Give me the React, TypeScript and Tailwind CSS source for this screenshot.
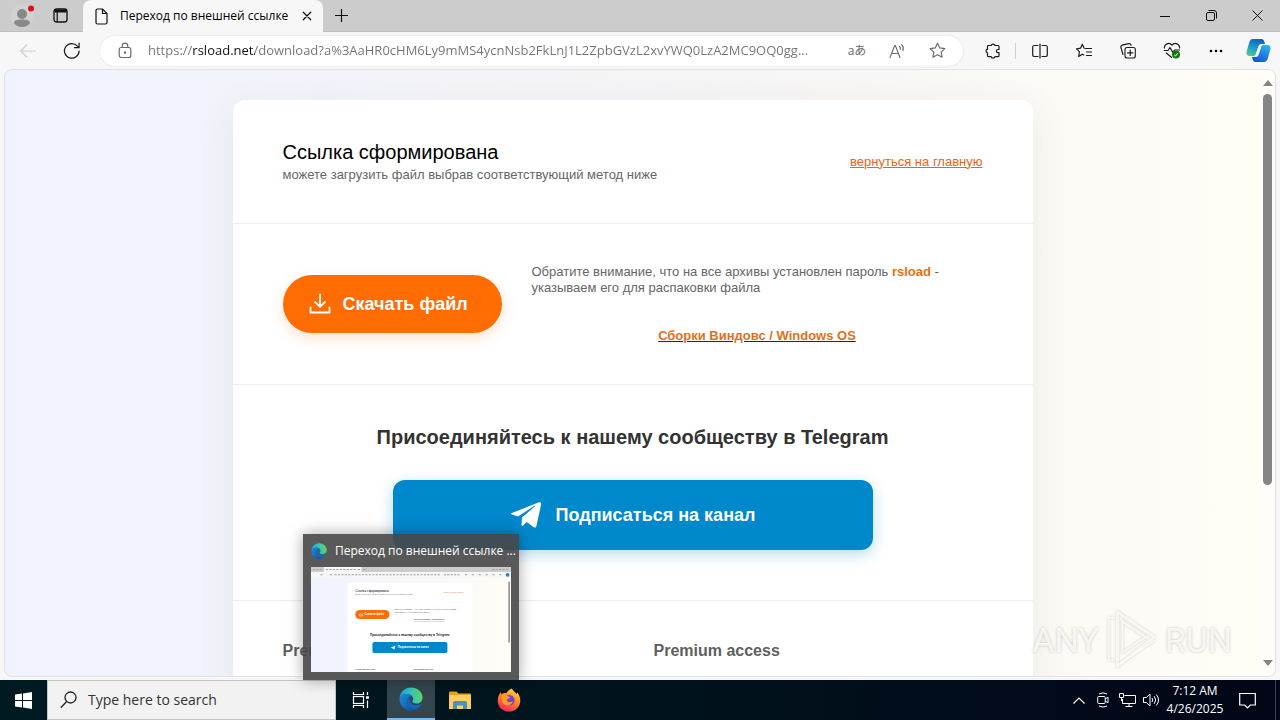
import type { ReactNode } from "react";

const PAGE_TITLE = "Переход по внешней ссылке";
const PAGE_URL =
  "https://rsload.net/download?a%3AaHR0cHM6Ly9mMS4ycnNsb2FkLnJ1L2ZpbGVzL2xvYWQ0LzA2MC9OQ0gg...";

function IconButton({
  label,
  className,
  children,
}: {
  label: string;
  className: string;
  children: ReactNode;
}) {
  return (
    <button
      type="button"
      aria-label={label}
      className={`flex shrink-0 items-center justify-center ${className}`}
    >
      {children}
    </button>
  );
}

function LineIcon({ size = 16, children }: { size?: number; children: ReactNode }) {
  return (
    <svg
      width={size}
      height={size}
      viewBox="0 0 16 16"
      fill="none"
      stroke="currentColor"
      strokeWidth="1.1"
      strokeLinecap="round"
      strokeLinejoin="round"
      aria-hidden="true"
    >
      {children}
    </svg>
  );
}

function EdgeLogo({ id, size }: { id: string; size: number }) {
  return (
    <svg width={size} height={size} viewBox="0 0 24 24" className="shrink-0" aria-hidden="true">
      <defs>
        <linearGradient id={`${id}-top`} x1="0" y1="0.6" x2="1" y2="0.4">
          <stop offset="0" stopColor="#1b9de2" />
          <stop offset="0.5" stopColor="#2fc3c8" />
          <stop offset="1" stopColor="#62d84e" />
        </linearGradient>
        <linearGradient id={`${id}-low`} x1="0" y1="0" x2="1" y2="1">
          <stop offset="0" stopColor="#1b8fdc" />
          <stop offset="1" stopColor="#0c4fa0" />
        </linearGradient>
      </defs>
      <path
        d="M.6 11C1.200 4.800 6 .4 12 .4c6.700 0 11.600 4.700 11.600 10 0 3.600-2.800 6.100-6.200 6.100-2.700 0-4.200-.9-4.200-1.900 0-.7 1-1.200 1-2.800 0-2.600-2.800-4.900-6.300-4.900C4.400 6.900 1.700 8.500.6 11z"
        fill={`url(#${id}-top)`}
      />
      <path
        d="M.5 12.300C.5 9 3.700 6.900 7.900 6.900c2.300 0 4.300 1 5.400 2.500-2.600-.6-5 1.500-5 4.700 0 4.400 3.400 7.800 7.700 8.600-1.200.5-2.600.9-4 .9C5.500 23.600.5 18.500.5 12.300z"
        fill={`url(#${id}-low)`}
      />
      <path
        d="M8.300 14.100c0-1.700.8-3.100 1.900-3.900-.3 4.500 3 8 7.300 8 1.800 0 3.300-.5 4.400-1.100.4-.2.7.1.5.5-1.300 2.600-3.600 4.400-6.400 5.100-4.300-.8-7.700-4.200-7.700-8.600z"
        fill="#1466b8"
      />
    </svg>
  );
}

function TabStrip() {
  return (
    <header className="flex h-8 shrink-0 items-stretch border-b border-[#bdbdbd] bg-[#cccccc] text-black">
      <div className="flex w-[83px] shrink-0 items-center rounded-br-md">
        <IconButton label="Profile" className="w-11">
          <svg width="26" height="24" viewBox="0 0 26 24" aria-hidden="true">
            <circle cx="13" cy="12" r="11" fill="#d4d2d0" />
            <circle cx="13" cy="10" r="5" fill="#8a8886" />
            <path d="M5 19c0-3 3.500-3.500 8-3.500s8 .5 8 3.500c-1.600 2.500-4.500 4-8 4s-6.400-1.500-8-4z" fill="#8a8886" />
            <circle cx="22" cy="4.500" r="3" fill="#e00b1c" />
          </svg>
        </IconButton>
        <IconButton label="Tab actions menu" className="w-8">
          <svg width="15" height="15" viewBox="0 0 15 15" fill="none" stroke="#111" aria-hidden="true">
            <rect x="1" y="1" width="13" height="13" rx="2.500" strokeWidth="1.300" />
            <path d="M1.500 3h12" strokeWidth="3" />
            <path d="M4.200 4v10" strokeWidth="1.200" />
          </svg>
        </IconButton>
      </div>
      <div className="-mb-px flex w-60 shrink-0 items-center rounded-t-lg bg-[#f7f7f7] pl-3">
        <svg width="13" height="17" viewBox="0 0 13 17" fill="none" stroke="#111" strokeWidth="1.200" aria-hidden="true">
          <path d="M2.500 1h5L12 5.500v9A1.500 1.500 0 0 1 10.500 16h-8A1.500 1.500 0 0 1 1 14.500v-12A1.500 1.500 0 0 1 2.500 1z" />
          <path d="M7.500 1v4.500H12" />
        </svg>
        <span className="flex-1 truncate pl-3 text-xs">{PAGE_TITLE}</span>
        <IconButton label="Close tab" className="w-8">
          <LineIcon size={12}>
            <path d="M3 3l10 10M13 3L3 13" strokeWidth="1.600" />
          </LineIcon>
        </IconButton>
      </div>
      <IconButton label="New tab" className="w-9">
        <svg width="15" height="15" viewBox="0 0 15 15" stroke="#111" strokeWidth="1.200" aria-hidden="true">
          <path d="M7.500 1v13M1 7.500h13" />
        </svg>
      </IconButton>
      <div className="ml-auto flex">
        <IconButton label="Minimize" className="w-[46px]">
          <svg width="10" height="10" stroke="#111" aria-hidden="true">
            <path d="M0 5.500h10" />
          </svg>
        </IconButton>
        <IconButton label="Restore" className="w-[46px]">
          <svg width="11" height="11" fill="none" stroke="#111" aria-hidden="true">
            <rect x=".5" y="2.500" width="8" height="8" rx="1.500" />
            <path d="M2.500.5H8A2.500 2.500 0 0 1 10.500 3v5.500" />
          </svg>
        </IconButton>
        <IconButton label="Close" className="w-[46px]">
          <svg width="11" height="11" stroke="#111" aria-hidden="true">
            <path d="M.5.5l10 10M10.500.5l-10 10" />
          </svg>
        </IconButton>
      </div>
    </header>
  );
}

function Toolbar() {
  return (
    <div className="flex h-[37px] shrink-0 items-center bg-[#f7f7f7] pr-0.5 pl-1.5 text-[#1b1b1b]">
      <IconButton label="Back" className="w-11 text-[#cfcfcf]">
        <LineIcon size={18}>
          <path d="M14.500 8h-13M7 2.500L1.500 8 7 13.500" />
        </LineIcon>
      </IconButton>
      <IconButton label="Refresh" className="w-11">
        <LineIcon size={18}>
          <path d="M14.300 8A6.500 6.500 0 1 1 12.800 3.700L14.200 5M14.300 1v4.100h-4.100" />
        </LineIcon>
      </IconButton>
      <div className="ml-1.5 flex h-[30px] min-w-0 flex-1 items-center rounded-full bg-white pr-1.5 pl-[18px] text-[#6b6b6b] shadow-[0_0_2px_#d8d8d8]">
        <svg width="14" height="17" viewBox="0 0 14 17" fill="none" stroke="currentColor" strokeWidth="1.200" aria-hidden="true">
          <rect x="1.200" y="5.500" width="11.600" height="10" rx="2" />
          <path d="M4.200 5.500V4a2.800 2.800 0 0 1 5.600 0v1.500" />
          <circle cx="7" cy="10.500" r=".6" fill="currentColor" />
        </svg>
        <input
          type="text"
          aria-label="Address"
          defaultValue={PAGE_URL}
          className="ml-4 min-w-0 flex-1 bg-[linear-gradient(90deg,#737373_45px,#111111_45px,#111111_107px,#737373_107px)] bg-clip-text text-[13px] text-transparent outline-none"
        />
        <IconButton label="Translate" className="w-10 text-xs">
          aあ
        </IconButton>
        <IconButton label="Read aloud" className="w-10">
          <LineIcon size={16}>
            <path d="M1 14.500L5.700 2.500h.6L11 14.500M2.800 10.500h6.500M10.500 3.500a3 3 0 0 1 .8 3M12.700 1.700a5.500 5.500 0 0 1 1.200 5.800" />
          </LineIcon>
        </IconButton>
        <IconButton label="Add to favorites" className="w-10">
          <LineIcon size={17}>
            <path d="M8 1.200l2.100 4.400 4.800.6-3.500 3.300.9 4.800L8 12l-4.300 2.300.9-4.800L1.100 6.200l4.800-.6z" />
          </LineIcon>
        </IconButton>
      </div>
      <IconButton label="Extensions" className="ml-2 w-11">
        <LineIcon>
          <path d="M3 2.500h3.200a1.900 1.900 0 0 1 3.700 0H13a1 1 0 0 1 1 1v3h-1a1.600 1.600 0 0 0 0 3.200h1v3a1 1 0 0 1-1 1H9.900a1.900 1.900 0 0 1-3.700 0H3.500a1 1 0 0 1-1-1V9.900a1.900 1.900 0 0 1 0-3.700V3.500a1 1 0 0 1 .5-1z" strokeWidth="1.200" />
        </LineIcon>
      </IconButton>
      <span className="mr-0.5 h-4 w-px bg-[#cfcfcf]" />
      <IconButton label="Split screen" className="w-11">
        <LineIcon>
          <path d="M8 1v14M6 2.500H2A1.500 1.500 0 0 0 .7 4v8A1.500 1.500 0 0 0 2 13.500h4M10 2.500h4A1.500 1.500 0 0 1 15.300 4v8a1.500 1.500 0 0 1-1.300 1.500h-4" strokeWidth="1.200" />
        </LineIcon>
      </IconButton>
      <IconButton label="Favorites" className="w-11">
        <LineIcon>
          <path d="M9 5.500h6.500M10.500 9h5M10.500 12.500h5M8 5L6.300 1.300 4.500 5.200l-4 .6 2.900 2.900-.7 4.700 3.600-2.200 1.500.8" strokeWidth="1.200" />
        </LineIcon>
      </IconButton>
      <IconButton label="Collections" className="w-11">
        <LineIcon>
          <rect x="5" y="4.500" width="10.300" height="10.500" rx="2" />
          <path d="M10.200 7.200v5.200M7.600 9.800h5.200M3 11.500L.9 4.300A1.800 1.800 0 0 1 2 2.200L8.800.7A1.700 1.700 0 0 1 11 2.200" strokeWidth="1.200" />
        </LineIcon>
      </IconButton>
      <IconButton label="Browser essentials" className="w-11">
        <svg width="18" height="17" viewBox="0 0 18 17" fill="none" stroke="currentColor" strokeWidth="1.200" strokeLinejoin="round" aria-hidden="true">
          <path d="M1.500 6.500A4.200 4.200 0 0 1 9 3.200a4.200 4.200 0 0 1 7.500 3.300M.8 8.500H5L7 5.500l2.800 5L11.500 8H17M3 10.800l6 5" />
          <circle cx="13" cy="12.500" r="4" fill="#107c10" stroke="none" />
          <path d="M11.300 13l1.200 1.100 2.100-2.800" stroke="white" strokeWidth="1" />
        </svg>
      </IconButton>
      <IconButton label="Settings and more" className="w-11">
        <svg width="14" height="4" aria-hidden="true">
          <circle cx="2" cy="2" r="1.300" />
          <circle cx="7" cy="2" r="1.300" />
          <circle cx="12" cy="2" r="1.300" />
        </svg>
      </IconButton>
      <IconButton label="Copilot" className="w-10">
        <svg width="25" height="23" viewBox="0 0 25 23" aria-hidden="true">
          <defs>
            <linearGradient id="copilot-a" x1="0.600" y1="0" x2="0.200" y2="1">
              <stop offset="0" stopColor="#0f62c4" />
              <stop offset="0.500" stopColor="#1b98cf" />
              <stop offset="1" stopColor="#4fcf86" />
            </linearGradient>
            <linearGradient id="copilot-b" x1="0.800" y1="0" x2="0.200" y2="1">
              <stop offset="0" stopColor="#2fb4f4" />
              <stop offset="1" stopColor="#1150cf" />
            </linearGradient>
          </defs>
          <path d="M7 0h8.500c1.800 0 2.500 1.500 3 3.200L19 5h-3.500c-2 0-2.800 1.200-3.400 3l-2.300 7c-.5 1.500-1.200 2-2.600 2H3.500C1 17 0 15.200.6 12.700L3.300 3.200C3.900 1.200 5 0 7 0z" fill="url(#copilot-a)" />
          <path d="M18 23H9.500c-1.800 0-2.500-1.500-3-3.200L6 18h3.500c2 0 2.800-1.200 3.400-3l2.300-7c.5-1.500 1.200-2 2.600-2h3.700c2.500 0 3.500 1.800 2.900 4.300l-2.700 9.500c-.6 2-1.700 3.200-3.700 3.200z" fill="url(#copilot-b)" />
        </svg>
      </IconButton>
    </div>
  );
}

function DownloadCard() {
  return (
    <article className="mx-auto w-full max-w-[800px] rounded-t-xl bg-white text-[13px] leading-4 text-[#666666] shadow-[0_10px_40px_rgba(60,60,60,0.07)]">
      <section className="flex items-center justify-between border-b border-[#eeeeee] px-[50px] py-10">
        <div>
          <h1 className="text-xl leading-6 text-black">Ссылка сформирована</h1>
          <p className="mt-[3px]">можете загрузить файл выбрав соответствующий метод ниже</p>
        </div>
        <a href="#home" className="text-[#e8641b] underline">вернуться на главную</a>
      </section>

      <section className="flex items-center gap-[30px] border-b border-[#eeeeee] px-[50px] py-10">
        <a
          href="#download"
          className="flex h-[58px] w-[219px] shrink-0 items-center gap-3 rounded-full bg-[#ff6c02] pl-[26px] text-lg font-bold text-white shadow-[0_5px_14px_rgba(255,108,2,0.2)]"
        >
          <svg width="22" height="22" viewBox="0 0 22 22" fill="none" stroke="white" strokeWidth="1.800" strokeLinecap="round" strokeLinejoin="round" aria-hidden="true">
            <path d="M11 1.500v12M6 9l5 4.800L16 9M1.500 14.500v5h19v-5" />
          </svg>
          Скачать файл
        </a>
        <div className="flex-1">
          <p>
            Обратите внимание, что на все архивы установлен пароль{" "}
            <b className="text-[#e8700f]">rsload</b> - указываем его для распаковки файла
          </p>
          <p className="mt-8 text-center">
            <a href="#windows" className="font-bold text-[#e0701c] underline decoration-[#2a0fa8]">
              Сборки Виндовс / Windows OS
            </a>
          </p>
        </div>
      </section>

      <section className="border-b border-[#eeeeee] px-[50px] pt-10 pb-[50px]">
        <h2 className="text-center text-xl leading-6 font-bold text-[#333333]">
          Присоединяйтесь к нашему сообществу в Telegram
        </h2>
        <a
          href="#telegram"
          className="mx-auto mt-[31px] flex h-[70px] max-w-[480px] items-center justify-center gap-3.5 rounded-xl bg-[#0088cc] text-lg font-bold text-white shadow-[0_4px_15px_rgba(0,136,204,0.3)]"
        >
          <svg width="32" height="26" viewBox="0 0 32 26" fill="white" aria-hidden="true">
            <path d="M1.200 11.300L29 .3c1.300-.5 2.500.3 2.100 2.200L26.400 24c-.4 1.600-1.400 2-2.700 1.200l-7-5.200-3.500 3.400c-.9.900-1.900.4-1.700-1l.5-6.900L25 4.300c.6-.5-.1-.8-.9-.3L8 14.400l-6.600-2.100c-.8-.3-.8-.7-.2-1z" />
          </svg>
          Подписаться на канал
        </a>
      </section>

      <section className="grid grid-cols-2 gap-[42px] px-[50px] pt-10 pb-10 text-base leading-5 font-bold text-[#5f5f5f]">
        <h3>Premium access</h3>
        <h3>Premium access</h3>
      </section>
    </article>
  );
}

function ScrollBar() {
  return (
    <div className="flex w-[15px] shrink-0 flex-col items-center bg-[#fffdf9] py-2.5">
      <svg width="10" height="6" fill="#858585" aria-hidden="true">
        <path d="M5 0l5 6H0z" />
      </svg>
      <div className="mt-2 min-h-0 w-full flex-1">
        <div className="mx-auto h-[69%] w-[9px] rounded-full bg-[#858585]" />
      </div>
      <svg width="10" height="6" fill="#858585" aria-hidden="true">
        <path d="M5 6L0 0h10z" />
      </svg>
    </div>
  );
}

function Watermark() {
  return (
    <div className="absolute right-12 bottom-12 flex items-center gap-1 font-['Roboto',sans-serif] text-[34px] text-white/80 [text-shadow:0_0_3px_#c4c0bd]">
      ANY
      <svg width="58" height="64" viewBox="0 0 60 64" fill="none" stroke="white" strokeWidth="3" strokeOpacity="0.8" strokeLinejoin="round" className="drop-shadow-[0_0_1px_#c4c0bd]" aria-hidden="true">
        <path d="M15 3l38 26-38 30z" />
        <path d="M12 9H6v44h5M20 13v32l24-16zM18 56l36-24" strokeWidth="2" />
      </svg>
      RUN
    </div>
  );
}

// Miniature of the window for the taskbar preview, in window coordinates
function WindowThumbnail() {
  return (
    <svg viewBox="0 0 1280 672" className="block w-full" fontFamily="Liberation Sans" aria-hidden="true">
      <defs>
        <linearGradient id="thumb-bg">
          <stop offset="0" stopColor="#f0f2ff" />
          <stop offset="1" stopColor="#fffdf5" />
        </linearGradient>
      </defs>
      <rect width="1280" height="672" fill="url(#thumb-bg)" />
      <rect width="1280" height="32" fill="#cccccc" />
      <rect x="83" width="240" height="32" fill="#f7f7f7" />
      <rect y="32" width="1280" height="37" fill="#f7f7f7" />
      <g stroke="#a0a0a0" strokeWidth="7" strokeDasharray="14 8">
        <path d="M12 16h56M96 16h190M300 16h14M334 16h14M1160 16h110M60 50h22M120 50h20M150 50h680M850 50h100" />
        <path d="M985 50h245" strokeDasharray="14 30" />
      </g>
      <circle cx="1258" cy="50" r="12" fill="#1e88dd" />
      <path d="M233 672V112q0-12 12-12h776q12 0 12 12v560z" fill="white" />
      <path d="M1268 95v388" stroke="#858585" strokeWidth="9" />
      <text x="283" y="159" fontSize="20">Ссылка сформирована</text>
      <g fontSize="13" fill="#666666">
        <text x="283" y="180">можете загрузить файл выбрав соответствующий метод ниже</text>
        <text x="850" y="167" fill="#e8641b">вернуться на главную</text>
        <text x="532" y="277">
          Обратите внимание, что на все архивы установлен пароль{" "}
          <tspan fill="#e8641b" fontWeight="bold">rsload</tspan> -
        </text>
        <text x="532" y="293">указываем его для распаковки файла</text>
        <text x="657" y="341" fill="#c81e3c" fontWeight="bold" textDecoration="underline">Сборки Виндовс / Windows OS</text>
      </g>
      <rect x="283" y="275" width="219" height="58" rx="29" fill="#ff6c02" />
      <rect x="393" y="480" width="480" height="70" rx="12" fill="#0088cc" />
      <path d="M510 516l30-14-5 26-12-6z" fill="white" />
      <path d="M310 300v14h20v-14M320 294v14" stroke="white" strokeWidth="4" fill="none" />
      <g fontWeight="bold">
        <text x="343" y="310" fontSize="18" fill="white">Скачать файл</text>
        <text x="377" y="444" fontSize="20" fill="#222222">Присоединяйтесь к нашему сообществу в Telegram</text>
        <text x="555" y="521" fontSize="18" fill="white">Подписаться на канал</text>
        <text x="283" y="656" fontSize="16" fill="#555555">Premium access</text>
        <text x="654" y="656" fontSize="16" fill="#555555">Premium access</text>
      </g>
    </svg>
  );
}

function TaskPreview() {
  return (
    <div className="absolute bottom-10 left-[303px] w-[216px] bg-[#474747]/90 pb-2 text-white shadow-[0_0_14px_rgba(0,0,0,0.35)]">
      <div className="flex h-[33px] items-center gap-2 pl-2">
        <EdgeLogo id="edge-preview" size={16} />
        <span className="text-xs whitespace-nowrap">{PAGE_TITLE} ...</span>
      </div>
      <div className="px-2">
        <WindowThumbnail />
      </div>
    </div>
  );
}

function Taskbar() {
  return (
    <footer className="flex h-10 shrink-0 items-stretch bg-gradient-to-r from-[#001a22] via-[#00131c] to-[#020617] text-white">
      <IconButton label="Start" className="w-[47px]">
        <svg width="17" height="17" viewBox="0 0 17 17" fill="white" aria-hidden="true">
          <path d="M0 2.500l7-1V8H0zM8 1.400L17 0v8H8zM0 9h7v6.500l-7-1zM8 9h9v8l-9-1.400z" />
        </svg>
      </IconButton>
      <label className="flex w-[289px] shrink-0 items-center gap-2.5 border border-[#c4c4c4] bg-[#f2f2f2] pl-3 text-[#222222]">
        <svg width="18" height="18" viewBox="0 0 18 18" fill="none" stroke="currentColor" strokeWidth="1.300" aria-hidden="true">
          <circle cx="10.500" cy="6.500" r="5.500" />
          <path d="M6.500 10.700L.7 16.700" />
        </svg>
        <input
          type="search"
          aria-label="Search"
          placeholder="Type here to search"
          className="min-w-0 flex-1 bg-transparent text-sm outline-none placeholder:text-[#333333]"
        />
      </label>
      <div className="flex gap-px">
        <IconButton label="Task View" className="w-[50px]">
          <svg width="18" height="16" viewBox="0 0 18 16" fill="none" stroke="white" strokeWidth="1.200" aria-hidden="true">
            <path d="M1.500 0v2.500h10V0M1.500 16v-2.500h10V16M15.500 0v3M15.500 8.500V16" />
            <rect x="1.500" y="4.500" width="10" height="7" />
            <path d="M14 5.500h3" strokeWidth="2.500" />
          </svg>
        </IconButton>
        <IconButton label="Microsoft Edge" className="w-12 border-b-2 border-[#76b9ed] bg-[#33454e]">
          <EdgeLogo id="edge-task" size={24} />
        </IconButton>
        <IconButton label="File Explorer" className="w-12">
          <svg width="22" height="19" viewBox="0 0 22 19" aria-hidden="true">
            <path d="M0 1.500Q0 .5 1 .5h6.500l2 2H21q1 0 1 1V18H0z" fill="#e8a317" />
            <path d="M0 4h22v14H0z" fill="#fccf5c" />
            <path d="M4 18v-6q0-2 2-2h10q2 0 2 2v6h-4v-3.500H8V18z" fill="#4a90c4" />
          </svg>
        </IconButton>
        <IconButton label="Firefox" className="w-12">
          <svg width="24" height="24" viewBox="0 0 24 24" aria-hidden="true">
            <defs>
              <linearGradient id="firefox-body" x1="0.800" y1="0" x2="0.300" y2="1">
                <stop offset="0" stopColor="#ffe14d" />
                <stop offset="0.450" stopColor="#ff8a1e" />
                <stop offset="1" stopColor="#f5225f" />
              </linearGradient>
            </defs>
            <path d="M15 .5c.5 2 3 3.200 4.500 5.500.5-.6.5-1.200.5-1.800 2 2 3.300 5 3.300 8.300C23.300 19 18.300 23.600 12 23.600S.7 18.800.7 12.700C.7 9 2 6.300 4 4c0 1 .2 1.700.6 2.300C6 5 8 4.600 9.500 5.200 10.500 3 12.500 1.500 15 .5z" fill="url(#firefox-body)" />
            <circle cx="12.300" cy="12.300" r="5.300" fill="#7542c8" />
            <path d="M5 7.500c2-1.200 4-.8 5.200.5 1.300.2 2.500.5 2.800 1.400-.8 1.300-3 1-3.200 2.500 0 2 3.500 3.300 6 1.300-1 3.500-4.500 5-7.800 3.500C4.500 15 4 10.500 5 7.500z" fill="#ff9a26" />
          </svg>
        </IconButton>
      </div>
      <div className="ml-auto flex">
        <IconButton label="Show hidden icons" className="w-6">
          <svg width="12" height="7" fill="none" stroke="white" strokeWidth="1.200" aria-hidden="true">
            <path d="M.5 6.500L6 1l5.500 5.500" />
          </svg>
        </IconButton>
        <IconButton label="Meet Now" className="w-6">
          <svg width="12" height="16" viewBox="0 0 12 16" fill="none" stroke="white" aria-hidden="true">
            <rect x=".7" y="4.500" width="7.500" height="7" rx="1" />
            <path d="M8.200 7L11 5.200v5.600L8.200 9M2 2q4-2.200 8 0M2 14q4 2.200 8 0" />
          </svg>
        </IconButton>
        <IconButton label="Network" className="w-6">
          <svg width="17" height="15" viewBox="0 0 17 15" fill="none" stroke="white" aria-hidden="true">
            <path d="M5.500 2.500h11v8H3.500V6M10 10.500v3M6.500 13.500h7M.5.500h4v4h-4zM2.500 4.500V8" />
          </svg>
        </IconButton>
        <IconButton label="Volume" className="w-6">
          <svg width="17" height="14" viewBox="0 0 17 14" fill="none" stroke="white" aria-hidden="true">
            <path d="M.5 4.500h2.800L7 1v12L3.300 9.500H.5zM9 5q1.500 2 0 4M11.200 3.200q3 3.800 0 7.600M13.300 1.500q4.500 5.500 0 11" />
          </svg>
        </IconButton>
        <button type="button" className="w-16 text-center text-xs leading-[18px]">
          <span className="block">7:12 AM</span>
          <span className="block">4/26/2025</span>
        </button>
        <IconButton label="Notifications" className="mr-2 w-10">
          <svg width="17" height="17" viewBox="0 0 17 17" fill="none" stroke="white" strokeWidth="1.200" aria-hidden="true">
            <path d="M.7 1.500h15.600v11.500h-5L8.500 15.800 5.700 13h-5z" />
          </svg>
        </IconButton>
        <span className="mr-1 border-l border-[#3c4350]" />
      </div>
    </footer>
  );
}

export default function App() {
  return (
    <div className="relative flex h-screen flex-col overflow-hidden bg-[#f7f7f7] font-['Open_Sans','Noto_Sans_CJK_JP',sans-serif]">
      <TabStrip />
      <Toolbar />
      <main className="mx-1 mb-[3px] flex min-h-0 flex-1 overflow-hidden rounded-lg border border-[#e2e2e4] bg-gradient-to-r from-[#f0f3ff] via-[#f5f4f6] to-[#fffdf5] font-['Liberation_Sans',sans-serif]">
        <div className="min-w-0 flex-1 overflow-hidden pt-[30px]">
          <DownloadCard />
        </div>
        <ScrollBar />
      </main>
      <Taskbar />
      <Watermark />
      <TaskPreview />
    </div>
  );
}
